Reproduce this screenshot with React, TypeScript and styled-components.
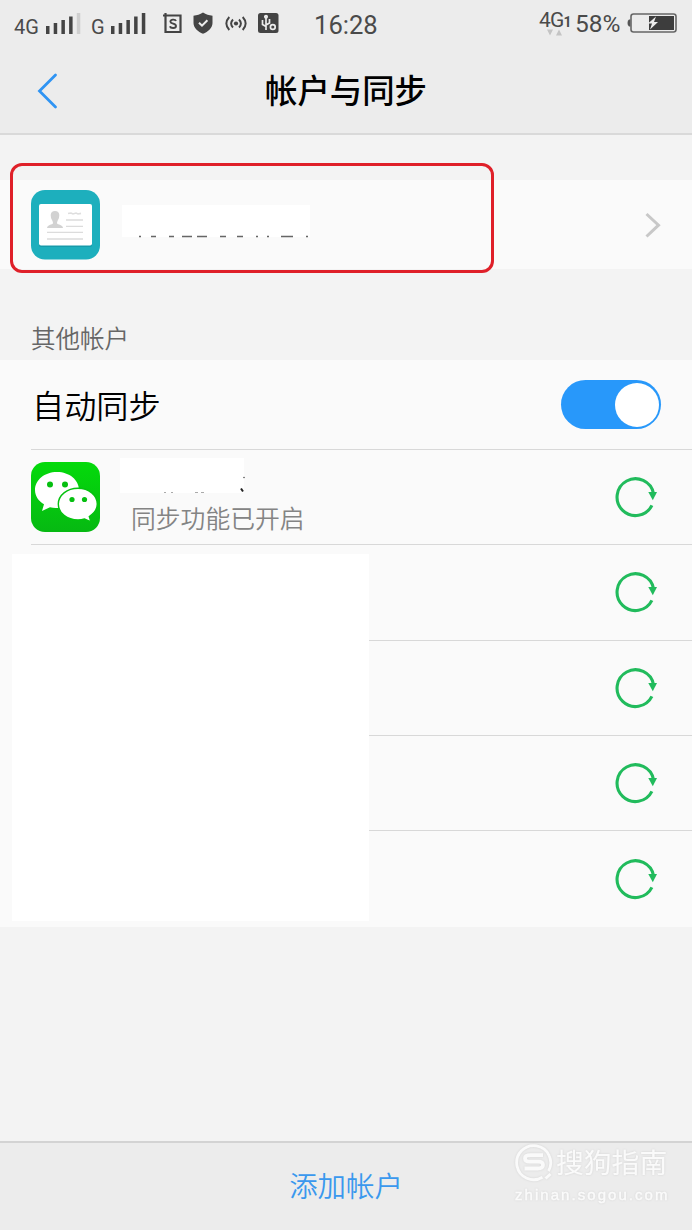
import React from 'react';
import styled, { createGlobalStyle } from 'styled-components';

const Global = createGlobalStyle`
  * { box-sizing: border-box; }
  body {
    margin: 0;
    background: #f3f3f3;
    font-family: Roboto, 'Noto Sans CJK SC', sans-serif;
  }
  svg { display: block; flex: none; }
`;

const Screen = styled.div`
  position: relative;
  width: 692px;
  height: 1230px;
  display: flex;
  flex-direction: column;
  background: #f3f3f3;
  overflow: hidden;
`;

const Top = styled.header`
  height: 135px;
  flex: none;
  background: #ececec;
  border-bottom: 2px solid #d9d9d9;
`;

const StatusBar = styled.div`
  display: flex;
  height: 48px;
  padding: 0 15px 0 14px;
  color: #4a4a4a;
`;

const StatusText = styled.span<{ $size: number; $top: number; $left?: number; $width: number }>`
  flex: none;
  width: ${(p) => p.$width}px;
  margin: ${(p) => p.$top}px 0 0 ${(p) => p.$left ?? 0}px;
  font-size: ${(p) => p.$size}px;
  line-height: 30px;
  height: 30px;
  white-space: nowrap;
`;

const StatusIcon = styled.svg<{ $left: number; $top: number }>`
  margin: ${(p) => p.$top}px 0 0 ${(p) => p.$left}px;
`;

const Network = styled.div`
  width: 33px;
  margin-left: 160px;
  padding-top: 6px;
`;

const NetworkLabel = styled.div`
  display: flex;
  align-items: baseline;
  height: 23px;
  font-size: 21px;
  line-height: 28px;
  letter-spacing: -0.8px;
  small { font-size: 14px; font-weight: 700; }
`;

const TitleBar = styled.div`
  display: grid;
  grid-template-columns: 100px 1fr 100px;
  align-items: center;
  height: 85px;
`;

const BackIcon = styled.svg`
  margin-left: 36px;
`;

const Title = styled.h1`
  margin: 0;
  padding-top: 3px;
  font-size: 32.4px;
  line-height: 40px;
  font-weight: 500;
  text-align: center;
  color: #000;
`;

const Account = styled.section`
  display: flex;
  align-items: center;
  height: 89px;
  margin-top: 45px;
  padding: 0 30px 0 30px;
  background: #fafafa;
`;

const AccountName = styled.div`
  width: 188px;
  height: 36px;
  margin: -4px auto 0 22px;
`;

const Highlight = styled.div`
  position: absolute;
  left: 10px;
  top: 163px;
  width: 484px;
  height: 110px;
  border: 3px solid #df2029;
  border-radius: 12px;
`;

const GroupLabel = styled.h2`
  height: 91px;
  margin: 0;
  padding: 54px 0 0 31px;
  font-size: 24.5px;
  line-height: 34px;
  font-weight: 350;
  color: #666;
`;

const List = styled.section`
  position: relative;
  background: #fafafa;
`;

const Row = styled.div<{ $height: number; $line?: boolean }>`
  display: flex;
  align-items: center;
  justify-content: space-between;
  height: ${(p) => p.$height}px;
  margin-left: 31px;
  padding-right: 31px;
  border-bottom: ${(p) => (p.$line ? '1px solid #d8d8d8' : 'none')};
`;

const RowTitle = styled.span`
  font-size: 32.2px;
  line-height: 40px;
  font-weight: 350;
  color: #000;
  padding: 4px 0 0 1px;
`;

const Toggle = styled.div`
  display: flex;
  justify-content: flex-end;
  width: 100px;
  height: 49px;
  padding: 2.5px 2px;
  border-radius: 25px;
  background: #2898fa;
`;

const Knob = styled.span`
  width: 44px;
  height: 44px;
  border-radius: 50%;
  background: #fff;
`;

const AccountText = styled.div`
  display: flex;
  flex-direction: column;
  height: 96px;
  margin: 0 auto 0 20px;
  padding-top: 9px;
`;

const SyncState = styled.span`
  margin: 8px 0 0 11px;
  font-size: 24.8px;
  line-height: 36px;
  font-weight: 350;
  color: #848484;
`;

const SyncIcon = styled.svg`
  margin: -1px 4px 0 0;
`;

const Cover = styled.div`
  position: absolute;
  left: 12px;
  top: 194px;
  width: 357px;
  height: 367px;
  background: #fff;
`;

const Footer = styled.footer`
  display: flex;
  justify-content: center;
  height: 89px;
  margin-top: auto;
  padding-top: 25px;
  border-top: 2px solid #d3d3d3;
  background: #ececec;
`;

const AddAccount = styled.button`
  height: 40px;
  padding: 0;
  border: 0;
  background: none;
  font-family: inherit;
  font-size: 28.4px;
  line-height: 40px;
  font-weight: 350;
  color: #3a98ee;
`;

const Watermark = styled.div`
  position: absolute;
  left: 515px;
  top: 1143px;
  width: 165px;
  color: #fafafa;
  filter: drop-shadow(0 0 1px rgba(0, 0, 0, 0.1));
`;

const Brand = styled.div`
  display: flex;
  gap: 3px;
  height: 39px;
  font-size: 27.8px;
  line-height: 41px;
  white-space: nowrap;
`;

const Site = styled.div`
  margin-top: 4px;
  font-family: 'Liberation Sans', sans-serif;
  font-size: 15px;
  line-height: 18px;
  letter-spacing: 2.05px;
  -webkit-text-stroke: 0.4px #fafafa;
`;

const Bars = ({ left, top, weak }: { left: number; top: number; weak?: boolean }) => (
  <StatusIcon $left={left} $top={top} width="36" height="22">
    {[8, 11, 14, 17.5, 21].map((h, i) => (
      <rect key={h} x={i * 7.7} y={21 - h} width="3.5" height={h} fill={weak && i === 4 ? '#cfcfcf' : '#444'} />
    ))}
  </StatusIcon>
);

const Sync = () => (
  <SyncIcon width="42" height="42" viewBox="0 0 42 42">
    <path d="M36.9 29.4A18.4 18.4 0 1 1 38.5 17.5" fill="none" stroke="#21bb5c" strokeWidth="3.1" />
    <path d="M33.3 16H42L37.8 24.3Z" fill="#21bb5c" />
  </SyncIcon>
);

export default function App() {
  return (
    <Screen>
      <Global />
      <Top>
        <StatusBar>
          <StatusText $size={20} $top={12} $width={26}>4G</StatusText>
          <Bars left={6} top={13} weak />
          <StatusText $size={20} $top={12} $left={9} $width={15}>G</StatusText>
          <Bars left={5} top={13} />
          <StatusIcon $left={16} $top={13} width="20" height="22">
            <path d="M2.5 2.5H17.5V19H2.5ZM0 2.5H5M2.5 0V5" fill="none" stroke="#444" strokeWidth="2.2" />
            <path d="M13 8C12.3 6 7.2 6.1 7.4 8.6C7.6 11.2 13 10.2 13 12.9C13 15.7 7.6 15.6 7 13.2" fill="none" stroke="#444" strokeWidth="1.9" />
          </StatusIcon>
          <StatusIcon $left={10} $top={12} width="20" height="22">
            <path d="M10 .5C13 2.7 16 3.2 19.5 3.7V11C19.5 16 15 19.8 10 21.8C5 19.8 .5 16 .5 11V3.7C4 3.2 7 2.7 10 .5Z" fill="#444" />
            <path d="M6 10.7L9 13.7L14.4 8.3" fill="none" stroke="#ececec" strokeWidth="2" />
          </StatusIcon>
          <StatusIcon $left={12} $top={15} width="22" height="17" fill="none" stroke="#444" strokeWidth="1.9">
            <path d="M4.3 2Q-1.6 8.5 4.3 15M8 4.5Q4.2 8.5 8 12.5M14 4.5Q17.8 8.5 14 12.5M17.7 2Q23.6 8.5 17.7 15" />
            <circle cx="11" cy="8.5" r="2.1" fill="#444" stroke="none" />
          </StatusIcon>
          <StatusIcon $left={11} $top={13} width="21" height="21" fill="none" stroke="#ececec" strokeWidth="1.7">
            <rect width="20.5" height="20" rx="2.5" fill="#444" stroke="none" />
            <path d="M8 3V17M4.5 7V11.5L8 13.5M8 12L11.5 10V6" />
            <circle cx="8" cy="3.8" r="1.2" />
            <circle cx="14.8" cy="14" r="2.4" />
          </StatusIcon>
          <StatusText $size={25.6} $top={10} $left={35} $width={65}>16:28</StatusText>
          <Network>
            <NetworkLabel>4G<small>1</small></NetworkLabel>
            <svg width="32" height="7"><path d="M8 0.5H14L11 6.5ZM17 6.5H23L20 0.5Z" fill="#c4c4c4" /></svg>
          </Network>
          <StatusText $size={24.5} $top={9} $left={4} $width={49}>58%</StatusText>
          <StatusIcon $left={3} $top={13} width="51" height="21">
            <path d="M3.5 6.5H2Q.5 7 .5 10T2 13.5H3.5Z" fill="#555" />
            <rect x="4" y="1" width="45" height="18" rx="2.5" fill="none" stroke="#666" strokeWidth="1.6" />
            <rect x="22" y="3" width="25" height="14" fill="#3d3d3d" />
            <path d="M29 3.5L21 10.5H25L23 16.5L31 9H27Z" fill="#ececec" />
          </StatusIcon>
        </StatusBar>
        <TitleBar>
          <BackIcon width="24" height="38" viewBox="0 0 24 38">
            <path d="M19.5 3L3.5 19L19.5 35" fill="none" stroke="#2f94f3" strokeWidth="2.8" strokeLinecap="round" />
          </BackIcon>
          <Title>帐户与同步</Title>
        </TitleBar>
      </Top>

      <Account>
        <svg width="70" height="70" viewBox="0 0 70 70">
          <rect x="1" width="69" height="69.5" rx="14" fill="#1dafbd" />
          <rect x="9" y="15" width="53" height="42" rx="2" fill="#13899a" opacity=".55" />
          <rect x="9" y="14" width="53" height="41.5" rx="2" fill="#fff" />
          <path d="M17 38Q17 35.3 22.5 34Q23.6 33.4 22.5 31Q20.5 28.5 20.7 25Q21 21 25 21T29.3 25Q29.5 28.5 27.5 31Q26.4 33.4 27.5 34Q33 35.3 33 38Z" fill="#d2d2d2" />
          <path d="M36 30H53M36 36.4H53M17 42.4H53M17 49H53" stroke="#dcdcdc" strokeWidth="1.4" />
          <path d="M38 23.5L41 23L43 24L46 23L48 24L51 23.4" stroke="#dedede" strokeWidth="1.6" fill="none" />
        </svg>
        <AccountName>
          <svg width="188" height="36">
            <rect width="188" height="32" fill="#fff" />
            <path d="M17 31.5H19M29 31.5H34M47 31.5H52M60 31.5H70M75 31.5H85M98 31.5H104M115 31.5H121M134 31.5H136M145 31.5H147M159 31.5H171M184 31.5H186" stroke="#666" strokeWidth="1.3" />
          </svg>
        </AccountName>
        <svg width="18" height="28" viewBox="0 0 18 28">
          <path d="M2.5 3L14.5 14.2L2.5 25.5" fill="none" stroke="#c8c8c8" strokeWidth="3" />
        </svg>
      </Account>

      <GroupLabel>其他帐户</GroupLabel>

      <List>
        <Row $height={90} $line>
          <RowTitle>自动同步</RowTitle>
          <Toggle><Knob /></Toggle>
        </Row>
        <Row $height={95} $line>
          <svg width="69" height="70" viewBox="0 0 69 70">
            <defs>
              <linearGradient id="wx" x1="0" y1="0" x2="0" y2="1">
                <stop offset="0" stopColor="#04da0b" />
                <stop offset="1" stopColor="#06b912" />
              </linearGradient>
            </defs>
            <rect width="69" height="70" rx="14" fill="url(#wx)" />
            <path d="M26 10C13.5 10 4 18 4 28C4 34 7.5 39 13 42.2L11 49L19 45.2Q22.5 46.2 26 46C38.5 46 48 38 48 28S38.5 10 26 10Z" fill="#fff" />
            <path d="M47 26.3C36 26.3 27.3 33.3 27.3 42.1S36 58 47 58Q50.5 58 53.5 57L60 60L58.3 54.5C63 51.5 66.3 47 66.3 42.1C66.3 33.3 58 26.3 47 26.3Z" fill="#fff" stroke="#05c20f" strokeWidth="1.4" />
            <g fill="#05bf10">
              <circle cx="19" cy="22.5" r="3" /><circle cx="34" cy="22.5" r="3" />
              <circle cx="41" cy="37.5" r="2.6" /><circle cx="53.5" cy="37.5" r="2.6" />
            </g>
          </svg>
          <AccountText>
            <svg width="126" height="36">
              <rect width="124" height="35" fill="#fff" />
              <path d="M44 34.5H46M51 34.5H53M75 34.5H78M81 34.5H84" stroke="#aaa" />
              <path d="M121 30.5L123 33.5" stroke="#222" strokeWidth="2" />
              <circle cx="124" cy="19.5" r=".8" fill="#555" />
            </svg>
            <SyncState>同步功能已开启</SyncState>
          </AccountText>
          <Sync />
        </Row>
        <Row $height={96} $line><span /><Sync /></Row>
        <Row $height={95} $line><span /><Sync /></Row>
        <Row $height={95} $line><span /><Sync /></Row>
        <Row $height={96}><span /><Sync /></Row>
        <Cover />
      </List>

      <Footer><AddAccount>添加帐户</AddAccount></Footer>

      <Highlight />
      <Watermark>
        <Brand>
          <svg width="38" height="39" viewBox="0 0 38 39" fill="none" stroke="#fafafa">
            <path d="M27.5 34.2A17 17 0 1 1 33.5 28" strokeWidth="2.8" />
            <path d="M28 12.2H15.5Q10 12.2 10 15.4T15 18.7H23Q28 18.7 28 22T22.5 25.5H9.5" strokeWidth="3.8" />
            <path d="M30.5 35.5L35.5 31" strokeWidth="3" />
          </svg>
          搜狗指南
        </Brand>
        <Site>zhinan.sogou.com</Site>
      </Watermark>
    </Screen>
  );
}
